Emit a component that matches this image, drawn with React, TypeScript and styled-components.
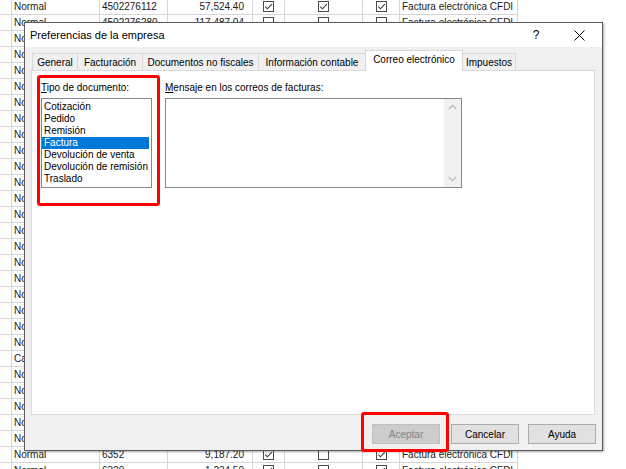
import React from 'react';
import styled, { createGlobalStyle } from 'styled-components';

const GlobalStyle = createGlobalStyle`
  html, body { margin: 0; padding: 0; background: #fff; overflow: hidden; }
  body { font-family: "Liberation Sans", Arial, sans-serif; }
  * { box-sizing: border-box; }
`;

const Page = styled.div`
  position: relative;
  width: 626px;
  height: 469px;
  overflow: hidden;
  background: #fff;
`;

/* ---------- spreadsheet behind ---------- */
const Sheet = styled.div`
  display: grid;
  grid-template-columns: 12px 88px 68px 85px 32px 78px 37px 118px 1fr;
  grid-auto-rows: 16px;
  margin-top: -1px;
  font-family: "Liberation Sans", Arial, sans-serif;
  font-size: 10px;
  color: #1a1a1a;
`;

const Cell = styled.div<{ $align?: 'left' | 'right' | 'center' }>`
  display: flex;
  align-items: center;
  justify-content: ${(p) =>
    p.$align === 'right' ? 'flex-end' : p.$align === 'center' ? 'center' : 'flex-start'};
  padding: 0 ${(p) => (p.$align === 'right' ? '8px' : '2px')};
  border-right: 1px solid #d6d6d6;
  border-bottom: 1px solid #d6d6d6;
  white-space: nowrap;
  overflow: hidden;
`;

const LastCell = styled.div`
  border-bottom: 1px solid #fff;
`;

const CheckSvg = styled.svg`
  width: 11px;
  height: 11px;
  display: block;
`;

const CheckBox = ({ checked }: { checked: boolean }) => (
  <CheckSvg viewBox="0 0 11 11">
    <rect x="0.5" y="0.5" width="10" height="10" fill="#fff" stroke="#4a4a4a" strokeWidth="1" />
    {checked && <path d="M2.3 5.6 L4.5 7.8 L8.8 3.2" fill="none" stroke="#3a3a3a" strokeWidth="1.1" />}
  </CheckSvg>
);

type SheetRow = { kind: string; ref: string; amount: string; a: boolean; b: boolean; c: boolean };

const rows: SheetRow[] = Array.from({ length: 30 }, (_, i) => {
  if (i === 0) return { kind: 'Normal', ref: '4502276112', amount: '57,524.40', a: true, b: true, c: true };
  if (i === 1) return { kind: 'Normal', ref: '4502276280', amount: '117,487.04', a: false, b: false, c: false };
  if (i === 28) return { kind: 'Normal', ref: '6352', amount: '9,187.20', a: true, b: false, c: true };
  if (i === 22) return { kind: 'Cancelado', ref: '6341', amount: '0.00', a: false, b: false, c: true };
  return { kind: 'Normal', ref: String(6300 + i), amount: '1,234.50', a: true, b: false, c: true };
});

/* ---------- dialog ---------- */
const Dialog = styled.div`
  position: absolute;
  left: 24px;
  top: 22px;
  width: 579px;
  height: 429px;
  border: 1px solid #5c5c5c;
  background: #f0f0f0;
  box-shadow: 1px 1px 2px rgba(0, 0, 0, 0.35);
  display: flex;
  flex-direction: column;
  font-family: "Liberation Sans", Arial, sans-serif;
  font-size: 10px;
  color: #000;
`;

const TitleBar = styled.div`
  height: 24px;
  flex: none;
  background: #fff;
  display: flex;
  align-items: center;
  padding-left: 5px;
`;

const Title = styled.div`
  flex: 1;
  font-size: 11px;
  color: #000;
`;

const HelpGlyph = styled.div`
  width: 24px;
  text-align: center;
  font-size: 12px;
  margin-right: 19px;
`;

const CloseBox = styled.div`
  width: 24px;
  display: flex;
  justify-content: center;
  margin-right: 11px;
`;

const Body = styled.div`
  flex: 1;
  display: flex;
  flex-direction: column;
  padding: 3px 6px 6px 6px;
`;

const TabStrip = styled.div`
  height: 20px;
  display: flex;
  align-items: flex-end;
  padding-left: 1px;
  position: relative;
  z-index: 1;
`;

const Tab = styled.div<{ $active?: boolean; $w: number }>`
  width: ${(p) => p.$w}px;
  height: ${(p) => (p.$active ? 21 : 17)}px;
  margin-bottom: ${(p) => (p.$active ? -1 : 0)}px;
  margin-left: -1px;
  &:first-child { margin-left: 0; }
  border: 1px solid #d9d9d9;
  border-bottom: none;
  background: ${(p) => (p.$active ? '#fff' : '#f0f0f0')};
  display: flex;
  align-items: center;
  justify-content: center;
  padding-bottom: ${(p) => (p.$active ? 3 : 0)}px;
  white-space: nowrap;
  font-size: 10px;
  position: relative;
  z-index: ${(p) => (p.$active ? 2 : 1)};
`;

const Panel = styled.div`
  height: 345px;
  flex: none;
  margin-right: 1px;
  background: #fff;
  border: 1px solid #d9d9d9;
  display: flex;
  align-items: flex-start;
  padding: 4px 0 0 5px;
`;

const HighlightGroup = styled.div`
  width: 123px;
  height: 131px;
  border: 3px solid #ff0000;
  border-radius: 3px;
  padding: 4px 0 0 1px;
  display: flex;
  flex-direction: column;
`;

const MessageGroup = styled.div`
  margin-left: 5px;
  padding-top: 7px;
  display: flex;
  flex-direction: column;
`;

const FieldLabel = styled.div`
  height: 12px;
  line-height: 12px;
  margin-bottom: 4px;
  white-space: nowrap;
`;

const ListBox = styled.div`
  width: 111px;
  height: 90px;
  border: 1px solid #828790;
  background: #fff;
  padding: 2px 0 0 0;
`;

const ListItem = styled.div<{ $selected?: boolean }>`
  height: 12px;
  line-height: 12px;
  padding: 0 2px;
  margin-right: 2px;
  white-space: nowrap;
  background: ${(p) => (p.$selected ? '#0078d7' : 'transparent')};
  color: ${(p) => (p.$selected ? '#fff' : '#000')};
`;

const MessageBox = styled.div`
  width: 297px;
  height: 90px;
  border: 1px solid #828790;
  background: #fff;
  display: flex;
`;

const MessageText = styled.div`
  flex: 1;
`;

const ScrollTrack = styled.div`
  width: 17px;
  background: #f0f0f0;
  display: flex;
  flex-direction: column;
  justify-content: space-between;
  align-items: center;
  padding: 5px 0 5px;
`;

const Chevron = ({ up }: { up?: boolean }) => (
  <svg width="9" height="6" viewBox="0 0 9 6">
    <path
      d={up ? 'M0.8 5 L4.5 1.3 L8.2 5' : 'M0.8 1 L4.5 4.7 L8.2 1'}
      fill="none"
      stroke="#b4b4b4"
      strokeWidth="1.1"
    />
  </svg>
);

const ButtonRow = styled.div`
  margin-top: 9px;
  height: 20px;
  display: flex;
  justify-content: flex-end;
  gap: 9px;
`;

const Button = styled.div<{ $disabled?: boolean }>`
  width: 68px;
  height: 20px;
  border: 1px solid ${(p) => (p.$disabled ? '#bfbfbf' : '#adadad')};
  background: ${(p) => (p.$disabled ? '#cccccc' : '#e1e1e1')};
  color: ${(p) => (p.$disabled ? '#838383' : '#000')};
  display: flex;
  align-items: center;
  justify-content: center;
  font-size: 10px;
`;

const AcceptWrap = styled.div`
  position: relative;
  margin-right: 2px;
  &::after {
    content: '';
    position: absolute;
    top: -12px;
    bottom: -8px;
    left: -11px;
    right: -9px;
    border: 3px solid #ff0000;
    border-radius: 3px;
    pointer-events: none;
  }
`;

const tabs = [
  { label: 'General', w: 46 },
  { label: 'Facturación', w: 66 },
  { label: 'Documentos no fiscales', w: 117 },
  { label: 'Información contable', w: 108 },
  { label: 'Correo electrónico', w: 98, active: true },
  { label: 'Impuestos', w: 54 },
];

const docTypes = [
  'Cotización',
  'Pedido',
  'Remisión',
  'Factura',
  'Devolución de venta',
  'Devolución de remisión',
  'Traslado',
];

export default function App() {
  return (
    <Page>
      <GlobalStyle />
      <Sheet>
        {rows.map((r, i) => (
          <React.Fragment key={i}>
            <Cell />
            <Cell>{r.kind}</Cell>
            <Cell>{r.ref}</Cell>
            <Cell $align="right">{r.amount}</Cell>
            <Cell $align="center"><CheckBox checked={r.a} /></Cell>
            <Cell $align="center"><CheckBox checked={r.b} /></Cell>
            <Cell $align="center"><CheckBox checked={r.c} /></Cell>
            <Cell>Factura electrónica CFDI</Cell>
            <LastCell />
          </React.Fragment>
        ))}
      </Sheet>

      <Dialog>
        <TitleBar>
          <Title>Preferencias de la empresa</Title>
          <HelpGlyph>?</HelpGlyph>
          <CloseBox>
            <svg width="11" height="11" viewBox="0 0 11 11">
              <path d="M0.5 0.5 L10.5 10.5 M10.5 0.5 L0.5 10.5" stroke="#000" strokeWidth="1" />
            </svg>
          </CloseBox>
        </TitleBar>
        <Body>
          <TabStrip>
            {tabs.map((t) => (
              <Tab key={t.label} $w={t.w} $active={t.active}>
                {t.label}
              </Tab>
            ))}
          </TabStrip>
          <Panel>
            <HighlightGroup>
              <FieldLabel>
                <u>T</u>ipo de documento:
              </FieldLabel>
              <ListBox>
                {docTypes.map((d) => (
                  <ListItem key={d} $selected={d === 'Factura'}>
                    {d}
                  </ListItem>
                ))}
              </ListBox>
            </HighlightGroup>
            <MessageGroup>
              <FieldLabel>
                <u>M</u>ensaje en los correos de facturas:
              </FieldLabel>
              <MessageBox>
                <MessageText />
                <ScrollTrack>
                  <Chevron up />
                  <Chevron />
                </ScrollTrack>
              </MessageBox>
            </MessageGroup>
          </Panel>
          <ButtonRow>
            <AcceptWrap>
              <Button $disabled>Aceptar</Button>
            </AcceptWrap>
            <Button>Cancelar</Button>
            <Button>Ayuda</Button>
          </ButtonRow>
        </Body>
      </Dialog>
    </Page>
  );
}
